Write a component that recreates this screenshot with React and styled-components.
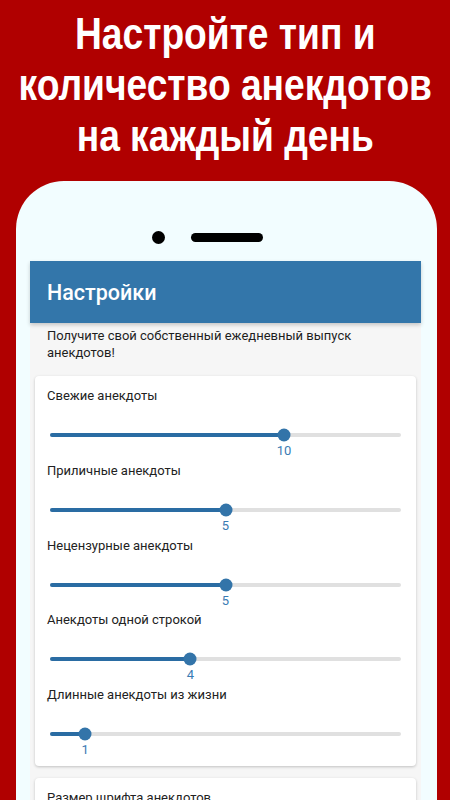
import styled, { createGlobalStyle } from "styled-components";

const GlobalStyle = createGlobalStyle`
  html, body {
    margin: 0;
    padding: 0;
    background: #b00000;
  }
  body {
    width: 450px;
    height: 800px;
    overflow: hidden;
    font-family: Roboto, "Noto Sans", sans-serif;
  }
`;

const sliders = [
  { label: "Свежие анекдоты", value: 10, max: 15 },
  { label: "Приличные анекдоты", value: 5, max: 10 },
  { label: "Нецензурные анекдоты", value: 5, max: 10 },
  { label: "Анекдоты одной строкой", value: 4, max: 10 },
  { label: "Длинные анекдоты из жизни", value: 1, max: 10 },
];

function SliderItem({ label, value, max }) {
  const pct = (value / max) * 100;
  return (
    <Item>
      <Label>{label}</Label>
      <Track>
        <Fill style={{ width: `${pct}%` }} />
        <Thumb style={{ left: `${pct}%` }} />
      </Track>
      <ValueRow>
        <Value style={{ left: `${pct}%` }}>{value}</Value>
      </ValueRow>
    </Item>
  );
}

export default function App() {
  return (
    <Page>
      <GlobalStyle />
      <Headline>
        <Line>Настройте тип и</Line>
        <Line>количество анекдотов</Line>
        <Line>на каждый день</Line>
      </Headline>
      <Phone>
        <Sensors>
          <Camera />
          <Speaker />
        </Sensors>
        <Screen>
          <AppBar>Настройки</AppBar>
          <Content>
            <Intro>Получите свой собственный ежедневный выпуск анекдотов!</Intro>
            <Card>
              {sliders.map((s) => (
                <SliderItem key={s.label} {...s} />
              ))}
            </Card>
            <Card>
              <Label>Размер шрифта анекдотов</Label>
            </Card>
          </Content>
        </Screen>
      </Phone>
    </Page>
  );
}

const Page = styled.div`
  display: flex;
  flex-direction: column;
  align-items: center;
  width: 450px;
  height: 800px;
  overflow: hidden;
`;

/* narrow bold headline: Arial metrics squeezed to Arial Narrow width */
const Headline = styled.h1`
  margin: 8px 0 0;
  color: #fff;
  font-family: "Liberation Sans", Arial, sans-serif;
  font-weight: 700;
  font-size: 45px;
  line-height: 51px;
  text-align: center;
  transform: scaleX(0.826);
`;

const Line = styled.div`
  white-space: nowrap;
`;

const Phone = styled.div`
  margin-top: 20px;
  align-self: flex-start;
  margin-left: 16px;
  width: 421px;
  flex: 1;
  background: #f2fdff;
  border-radius: 48px 48px 0 0;
  display: flex;
  flex-direction: column;
`;

const Sensors = styled.div`
  display: grid;
  grid-template-columns: 1fr auto 1fr;
  align-items: center;
  height: 24px;
  margin-top: 44px;
  margin-bottom: 12px;
`;

const Camera = styled.div`
  justify-self: end;
  margin-right: 26px;
  width: 13px;
  height: 13px;
  border-radius: 50%;
  background: #000;
`;

const Speaker = styled.div`
  width: 72px;
  height: 9px;
  border-radius: 5px;
  background: #000;
`;

const Screen = styled.div`
  margin: 0 16px 0 14px;
  flex: 1;
  background: #f6f6f6;
  display: flex;
  flex-direction: column;
`;

const AppBar = styled.div`
  height: 62px;
  display: flex;
  align-items: center;
  padding-left: 17px;
  background: #3376aa;
  color: #fff;
  font-size: 21.5px;
  font-weight: 500;
  box-shadow: 0 2px 4px rgba(0, 0, 0, 0.2);
  position: relative;
  z-index: 1;
`;

const Content = styled.div`
  padding: 4px 5px 0;
  display: flex;
  flex-direction: column;
  gap: 12px;
`;

const Intro = styled.p`
  margin: 0 0 3px;
  padding: 0 12px;
  font-size: 13px;
  line-height: 17px;
  color: #1e1e1e;
`;

const Card = styled.div`
  background: #fff;
  border-radius: 4px;
  box-shadow: 0 1px 3px rgba(0, 0, 0, 0.22);
  padding: 10px 12px;
`;

const Item = styled.div`
  height: 74.75px;
  &:last-child {
    height: 71px;
  }
`;

const Label = styled.div`
  font-size: 13px;
  line-height: 20px;
  color: #222;
`;

const Track = styled.div`
  position: relative;
  margin: 27px 3px 0;
  height: 4px;
  border-radius: 2px;
  background: #e0e0e0;
`;

const Fill = styled.div`
  height: 100%;
  border-radius: 2px;
  background: #2a6ca3;
`;

const Thumb = styled.div`
  position: absolute;
  top: 50%;
  width: 13px;
  height: 13px;
  border-radius: 50%;
  background: #3374a9;
  transform: translate(-50%, -50%);
`;

const ValueRow = styled.div`
  position: relative;
  margin: 6px 3px 0;
  height: 16px;
`;

const Value = styled.span`
  position: absolute;
  top: 0;
  transform: translateX(-50%);
  font-size: 13px;
  line-height: 16px;
  color: #3a7bb3;
`;
